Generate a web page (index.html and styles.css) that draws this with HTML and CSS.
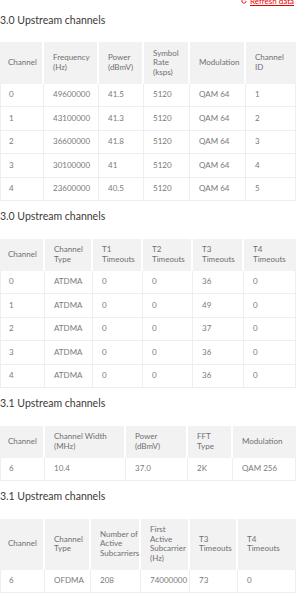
FILE: index.html
```html
<!DOCTYPE html>
<html lang="en">
<head>
<meta charset="utf-8">
<title>Upstream channels</title>
<link rel="stylesheet" href="styles.css">
</head>
<body>
<div class="page">
  <div class="toolbar">
    <a class="refresh" href="#">
      <svg class="refresh-icon" viewBox="0 0 10 10" width="6" height="6" aria-hidden="true">
        <path d="M8.5 5a3.5 3.5 0 1 1-1.2-2.6" fill="none" stroke="#e60000" stroke-width="1.6"/>
        <path d="M6 0.5 L9 2.4 L6.2 4.2 Z" fill="#e60000"/>
      </svg>
      <span>Refresh data</span>
    </a>
  </div>

  <section class="block">
    <h2 class="title">3.0 Upstream channels</h2>
    <table class="grid">
      <colgroup>
        <col class="c44"><col class="c55"><col class="c45"><col class="c46"><col class="c56"><col class="c50">
      </colgroup>
      <thead>
        <tr><th>Channel</th><th>Frequency<br>(Hz)</th><th>Power<br>(dBmV)</th><th>Symbol<br>Rate<br>(ksps)</th><th>Modulation</th><th>Channel<br>ID</th></tr>
      </thead>
      <tbody>
        <tr><td>0</td><td>49600000</td><td>41.5</td><td>5120</td><td>QAM 64</td><td>1</td></tr>
        <tr><td>1</td><td>43100000</td><td>41.3</td><td>5120</td><td>QAM 64</td><td>2</td></tr>
        <tr><td>2</td><td>36600000</td><td>41.8</td><td>5120</td><td>QAM 64</td><td>3</td></tr>
        <tr><td>3</td><td>30100000</td><td>41</td><td>5120</td><td>QAM 64</td><td>4</td></tr>
        <tr><td>4</td><td>23600000</td><td>40.5</td><td>5120</td><td>QAM 64</td><td>5</td></tr>
      </tbody>
    </table>
  </section>

  <section class="block">
    <h2 class="title">3.0 Upstream channels</h2>
    <table class="grid">
      <colgroup>
        <col class="c45"><col class="c48"><col class="c50"><col class="c50"><col class="c51"><col class="c52">
      </colgroup>
      <thead>
        <tr><th>Channel</th><th>Channel<br>Type</th><th>T1<br>Timeouts</th><th>T2<br>Timeouts</th><th>T3<br>Timeouts</th><th>T4<br>Timeouts</th></tr>
      </thead>
      <tbody>
        <tr><td>0</td><td>ATDMA</td><td>0</td><td>0</td><td>36</td><td>0</td></tr>
        <tr><td>1</td><td>ATDMA</td><td>0</td><td>0</td><td>49</td><td>0</td></tr>
        <tr><td>2</td><td>ATDMA</td><td>0</td><td>0</td><td>37</td><td>0</td></tr>
        <tr><td>3</td><td>ATDMA</td><td>0</td><td>0</td><td>36</td><td>0</td></tr>
        <tr><td>4</td><td>ATDMA</td><td>0</td><td>0</td><td>36</td><td>0</td></tr>
      </tbody>
    </table>
  </section>

  <section class="block">
    <h2 class="title">3.1 Upstream channels</h2>
    <table class="grid">
      <colgroup>
        <col class="c45"><col class="c81"><col class="c62"><col class="c45"><col class="c63">
      </colgroup>
      <thead>
        <tr><th>Channel</th><th>Channel Width<br>(MHz)</th><th>Power<br>(dBmV)</th><th>FFT<br>Type</th><th>Modulation</th></tr>
      </thead>
      <tbody>
        <tr><td>6</td><td>10.4</td><td>37.0</td><td>2K</td><td>QAM 256</td></tr>
      </tbody>
    </table>
  </section>

  <section class="block">
    <h2 class="title">3.1 Upstream channels</h2>
    <table class="grid">
      <colgroup>
        <col class="c45"><col class="c46"><col class="c50"><col class="c49"><col class="c48"><col class="c58">
      </colgroup>
      <thead>
        <tr><th>Channel</th><th>Channel<br>Type</th><th>Number of<br>Active<br>Subcarriers</th><th>First<br>Active<br>Subcarrier<br>(Hz)</th><th>T3<br>Timeouts</th><th>T4<br>Timeouts</th></tr>
      </thead>
      <tbody>
        <tr><td>6</td><td>OFDMA</td><td>208</td><td>74000000</td><td>73</td><td>0</td></tr>
      </tbody>
    </table>
  </section>
</div>
</body>
</html>
```

FILE: styles.css
```css
html, body {
  margin: 0;
  padding: 0;
  background: #ffffff;
}

body {
  font-family: Lato, "Open Sans", "Liberation Sans", sans-serif;
  color: #333333;
}

.page {
  width: 296px;
  overflow: hidden;
}

.toolbar {
  display: flex;
  justify-content: flex-end;
  height: 6px;
  margin-top: -1.5px;
  padding-right: 2px;
}

.refresh {
  display: flex;
  align-items: center;
  gap: 3px;
  margin-top: -1px;
  color: #e60000;
  font-size: 8px;
  line-height: 7px;
  text-decoration: underline;
}

.refresh-icon {
  display: block;
}

.block {
  padding-top: 9px;
}

.title {
  margin: 0 0 15.5px 0;
  font-size: 10.5px;
  line-height: 13px;
  font-weight: normal;
  color: #3a3a3a;
}

.grid {
  width: 296px;
  table-layout: fixed;
  border-collapse: separate;
  border-spacing: 0;
  font-size: 8px;
  line-height: 9.5px;
}

.grid th {
  background: #f2f2f2;
  color: #707070;
  font-weight: normal;
  text-align: left;
  vertical-align: middle;
  white-space: nowrap;
  padding: 6.5px 2px 6.5px 9px;
  border-right: 2px solid #ffffff;
}

.grid th:last-child {
  border-right: 0;
}

.grid td {
  color: #7a7a7a;
  text-align: left;
  vertical-align: middle;
  white-space: nowrap;
  padding: 6.5px 2px 6.5px 9px;
  border-right: 1px solid #eeeeee;
  border-bottom: 1px solid #eeeeee;
}

.grid td:first-child {
  border-left: 1px solid #eeeeee;
  padding-left: 8px;
}

.grid th:first-child {
  padding-left: 8px;
}

.c44 { width: 44px; }
.c45 { width: 45px; }
.c46 { width: 46px; }
.c48 { width: 48px; }
.c49 { width: 49px; }
.c50 { width: 50px; }
.c51 { width: 51px; }
.c52 { width: 52px; }
.c55 { width: 55px; }
.c56 { width: 56px; }
.c58 { width: 58px; }
.c62 { width: 62px; }
.c63 { width: 63px; }
.c81 { width: 81px; }
```
